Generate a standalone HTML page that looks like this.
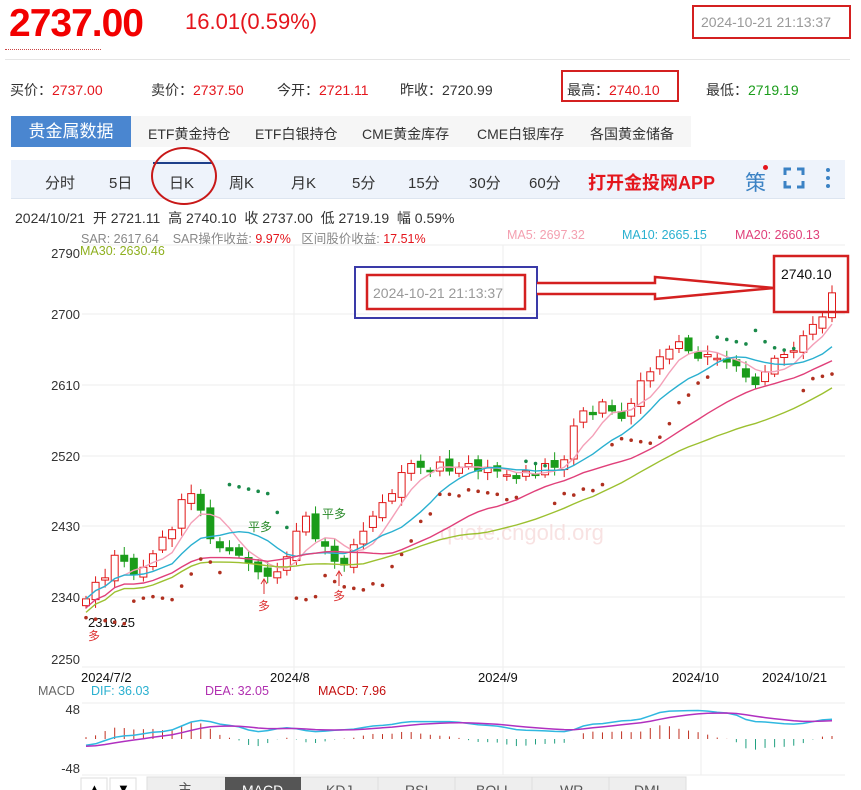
<!DOCTYPE html>
<html><head><meta charset="utf-8">
<style>
body{margin:0;width:861px;height:790px;overflow:hidden;background:#fff;font-family:"Liberation Sans","Noto Sans CJK SC",sans-serif;position:relative}
.a{position:absolute;white-space:nowrap}
.r{color:#e4151c}.g{color:#1a9c1a}
</style></head><body>
<div class="a" style="left:9px;top:2px;font-size:39px;font-weight:bold;color:#f20000;letter-spacing:-1px">2737.00</div>
<div class="a" style="left:185px;top:9px;font-size:22px;color:#e4151c">16.01(0.59%)</div>
<div class="a" style="left:692px;top:5px;width:155px;height:30px;border:2px solid #d42020"></div>
<div class="a" style="left:701px;top:14px;font-size:14px;color:#999">2024-10-21 21:13:37</div>
<div class="a" style="left:5px;top:49px;width:96px;border-top:1px dotted #c44"></div>
<div class="a" style="left:5px;top:59px;width:845px;border-top:1px solid #e5e5e5"></div>
<div class="a" style="left:10px;top:80px;font-size:14px;color:#333">买价：<span class="r">2737.00</span></div>
<div class="a" style="left:151px;top:80px;font-size:14px;color:#333">卖价：<span class="r">2737.50</span></div>
<div class="a" style="left:277px;top:80px;font-size:14px;color:#333">今开：<span class="r">2721.11</span></div>
<div class="a" style="left:400px;top:80px;font-size:14px;color:#333">昨收：2720.99</div>
<div class="a" style="left:561px;top:70px;width:114px;height:28px;border:2px solid #d42020"></div>
<div class="a" style="left:567px;top:80px;font-size:14px;color:#333">最高：<span class="r">2740.10</span></div>
<div class="a" style="left:706px;top:80px;font-size:14px;color:#333">最低：<span class="g">2719.19</span></div>
<div class="a" style="left:11px;top:116px;width:680px;height:31px;background:#f6f6f6"></div>
<div class="a" style="left:11px;top:116px;width:120px;height:31px;background:#4a86d0;color:#fff;font-size:17px;line-height:31px;text-align:center">贵金属数据</div>
<div class="a" style="left:148px;top:124px;font-size:14px;color:#333">ETF黄金持仓</div>
<div class="a" style="left:255px;top:124px;font-size:14px;color:#333">ETF白银持仓</div>
<div class="a" style="left:362px;top:124px;font-size:14px;color:#333">CME黄金库存</div>
<div class="a" style="left:477px;top:124px;font-size:14px;color:#333">CME白银库存</div>
<div class="a" style="left:590px;top:124px;font-size:14px;color:#333">各国黄金储备</div>
<div class="a" style="left:11px;top:160px;width:834px;height:38px;background:#eef3fb;border-bottom:1px solid #dde5f0"></div>
<div class="a" style="left:153px;top:162px;width:59px;border-top:2px solid #1d3f8a"></div>
<div class="a" style="top:172px;left:0;font-size:15px;color:#333;width:600px">
<span class="a" style="left:45px">分时</span><span class="a" style="left:109px">5日</span><span class="a" style="left:169px">日K</span><span class="a" style="left:229px">周K</span><span class="a" style="left:291px">月K</span><span class="a" style="left:352px">5分</span><span class="a" style="left:408px">15分</span><span class="a" style="left:469px">30分</span><span class="a" style="left:529px">60分</span></div>
<div class="a" style="left:588px;top:169px;font-size:18px;font-weight:bold;color:#e4151c">打开金投网APP</div>
<div class="a" style="left:745px;top:167px;font-size:21px;color:#3b82c4">策</div>
<div class="a" style="left:763px;top:165px;width:5px;height:5px;border-radius:50%;background:#e4151c"></div>
<svg class="a" style="left:783px;top:167px" width="22" height="22"><path d="M2 8V2H8M14 2H20V8M20 14V20H14M8 20H2V14" fill="none" stroke="#3b82c4" stroke-width="3"/></svg>
<svg class="a" style="left:824px;top:166px" width="8" height="24"><circle cx="4" cy="4" r="2" fill="#3b82c4"/><circle cx="4" cy="12" r="2" fill="#3b82c4"/><circle cx="4" cy="20" r="2" fill="#3b82c4"/></svg>
<div class="a" style="left:15px;top:208px;font-size:14px;color:#333">2024/10/21 &nbsp;开 2721.11 &nbsp;高 2740.10 &nbsp;收 2737.00 &nbsp;低 2719.19 &nbsp;幅 0.59%</div>
<div class="a" style="left:81px;top:228px;font-size:12.5px;color:#888">SAR: 2617.64 &nbsp;&nbsp;&nbsp;SAR操作收益: <span class="r">9.97%</span> &nbsp;&nbsp;区间股价收益: <span class="r">17.51%</span></div>
<div class="a" style="left:507px;top:228px;font-size:12.5px;color:#f4a0b0">MA5: 2697.32</div>
<div class="a" style="left:622px;top:228px;font-size:12.5px;color:#2ab0d0">MA10: 2665.15</div>
<div class="a" style="left:735px;top:228px;font-size:12.5px;color:#e0407a">MA20: 2660.13</div>
<div class="a" style="left:80px;top:244px;font-size:12.5px;color:#8fb020">MA30: 2630.46</div>
<svg class="a" style="left:0;top:0" width="861" height="790">
<g stroke="#eee" stroke-width="1">
<line x1="82" y1="245" x2="845" y2="245"/><line x1="82" y1="314" x2="845" y2="314"/><line x1="82" y1="385" x2="845" y2="385"/><line x1="82" y1="456" x2="845" y2="456"/><line x1="82" y1="526" x2="845" y2="526"/><line x1="82" y1="597" x2="845" y2="597"/><line x1="82" y1="667" x2="845" y2="667"/>
<line x1="294" y1="245" x2="294" y2="775"/><line x1="503" y1="245" x2="503" y2="775"/><line x1="701" y1="245" x2="701" y2="775"/>
<line x1="82" y1="703" x2="845" y2="703"/><line x1="82" y1="775" x2="845" y2="775"/>
</g>
<g font-size="13" fill="#333" text-anchor="end"><text x="80" y="258">2790</text><text x="80" y="319">2700</text><text x="80" y="390">2610</text><text x="80" y="461">2520</text><text x="80" y="531">2430</text><text x="80" y="602">2340</text><text x="80" y="664">2250</text></g>
<g font-size="13" fill="#111"><text x="81" y="682">2024/7/2</text><text x="270" y="682">2024/8</text><text x="478" y="682">2024/9</text><text x="672" y="682">2024/10</text><text x="762" y="682">2024/10/21</text></g>
<text x="88" y="627" font-size="13" fill="#111">2319.25</text>
<text x="88" y="640" font-size="12" fill="#d33">多</text>
<text x="258" y="610" font-size="12" fill="#d33">多</text><text x="333" y="600" font-size="12" fill="#d33">多</text>
<g stroke="#d33" fill="none"><path d="M264 580V594M261 584L264 579L267 584M339 572V586M336 576L339 571L342 576"/></g>
<text x="248" y="531" font-size="12" fill="#2a8a2a">平多</text><text x="322" y="518" font-size="12" fill="#2a8a2a">平多</text>
<text x="440" y="540" font-size="22" fill="#f4d0d0" opacity=".6">quote.cngold.org</text>
<g font-size="12.5"><text x="38" y="695" fill="#666">MACD</text><text x="91" y="695" fill="#2ab0d0">DIF: 36.03</text><text x="205" y="695" fill="#b030b0">DEA: 32.05</text><text x="318" y="695" fill="#c41010">MACD: 7.96</text></g>
<g font-size="13" fill="#333" text-anchor="end"><text x="80" y="714">48</text><text x="80" y="773">-48</text></g>
<g id="cd"></g>
<rect x="355" y="267" width="182" height="51" fill="none" stroke="#3a3aa8" stroke-width="2"/>
<rect x="367" y="275" width="158" height="34" fill="none" stroke="#d42020" stroke-width="2.5"/>
<text x="373" y="298" font-size="14" fill="#999">2024-10-21 21:13:37</text>
<path d="M537 283 L655 283 L655 277 L774 288 L655 299 L655 294 L537 294" fill="#fff" stroke="#d42020" stroke-width="2.5"/>
<rect x="774" y="256" width="74" height="56" fill="none" stroke="#d42020" stroke-width="2.5"/>
<text x="781" y="279" font-size="14" fill="#111">2740.10</text>
<g font-size="13"><rect x="81" y="778" width="26" height="14" fill="#fff" stroke="#ddd"/><rect x="110" y="778" width="26" height="14" fill="#fff" stroke="#ddd"/>
<text x="88" y="793">▲</text><text x="117" y="793">▼</text>
<rect x="147" y="777" width="539" height="15" fill="#eee" stroke="#ddd"/><rect x="225" y="777" width="76" height="15" fill="#555"/>
<g stroke="#ddd"><line x1="378" y1="777" x2="378" y2="790"/><line x1="455" y1="777" x2="455" y2="790"/><line x1="532" y1="777" x2="532" y2="790"/><line x1="609" y1="777" x2="609" y2="790"/></g>
<g fill="#555" font-size="14"><text x="178" y="794">主</text><text x="326" y="795">KDJ</text><text x="405" y="795">RSI</text><text x="476" y="795">BOLL</text><text x="560" y="795">WR</text><text x="634" y="795">DMI</text></g>
<text x="242" y="795" fill="#fff" font-size="14">MACD</text></g>
</svg>
<div class="a" style="left:151px;top:147px;width:62px;height:54px;border:2px solid #c81818;border-radius:50%"></div>
<script>
var C=[2330,2352,2358,2388,2380,2362,2372,2390,2412,2422,2462,2470,2448,2410,2398,2394,2388,2378,2366,2360,2366,2386,2420,2440,2410,2400,2380,2375,2402,2420,2440,2458,2470,2498,2510,2505,2500,2512,2500,2505,2510,2500,2505,2500,2495,2490,2500,2495,2510,2505,2515,2560,2580,2575,2592,2580,2570,2590,2620,2632,2652,2662,2672,2660,2650,2655,2650,2645,2640,2625,2615,2632,2650,2655,2660,2680,2695,2705,2737];
var n=C.length,x0=86,dx=(832-86)/(n-1);
function Y(p){return 253+(2790-p)*0.7519}
var h='',O=[2321],i,j,x;for(i=1;i<n;i++)O.push(C[i-1]+((i*37)%11-5));
for(i=0;i<n;i++){var o=O[i],c=C[i];x=x0+i*dx;var up=c>=o,hi=Math.max(o,c)+4+(i*13)%9,lo=Math.min(o,c)-4-(i*7)%8;
var col=up?'#e01818':'#1a9c1a',t=Y(Math.max(o,c)),b=Y(Math.min(o,c));if(b-t<1.5)b=t+1.5;
h+='<line x1="'+x+'" y1="'+Y(hi)+'" x2="'+x+'" y2="'+Y(lo)+'" stroke="'+col+'"/>';
h+='<rect x="'+(x-3.5)+'" y="'+t+'" width="7" height="'+(b-t)+'" fill="'+(up?'#fff':col)+'" stroke="'+col+'"/>';}
function ma(k,col){var p='';for(var i=0;i<n;i++){var s=0,m=Math.min(k,i+1);for(var j=0;j<m;j++)s+=C[i-j];p+=(i?'L':'M')+(x0+i*dx).toFixed(1)+' '+Y(s/m-(k>10?k*0.6:0)).toFixed(1);}h+='<path d="'+p+'" fill="none" stroke="'+col+'" stroke-width="1.4"/>';}
ma(5,'#f4a0b8');ma(10,'#2ab0d0');ma(20,'#e0407a');ma(30,'#9cc030');
for(i=0;i<n;i++){x=x0+i*dx;var below=!((i>=15&&i<=21)||(i>=46&&i<=48)||(i>=66&&i<=74));
var v=below?Math.min.apply(null,C.slice(Math.max(0,i-4),i+1))-25-(i%5)*2:Math.max.apply(null,C.slice(Math.max(0,i-8),i+1))+15-(i%7)*3;
h+='<circle cx="'+x+'" cy="'+Y(v)+'" r="1.8" fill="'+(below?'#b03020':'#1a8a4a')+'"/>';}
var K=[[0,-10],[4,5],[8,12],[12,30],[15,22],[18,12],[21,18],[24,12],[27,15],[31,22],[34,28],[38,28],[42,22],[46,14],[50,12],[53,24],[57,30],[61,45],[64,46],[67,42],[70,28],[74,24],[78,32]];
function kv(i){for(var k=0;k<K.length-1;k++){if(i<=K[k+1][0]){var a=K[k],b=K[k+1],t=(i-a[0])/(b[0]-a[0]);t=(1-Math.cos(t*Math.PI))/2;return a[1]+(b[1]-a[1])*t;}}return K[K.length-1][1];}
var z=739,d1='',d2='',dea=-12;
for(i=0;i<n;i++){x=x0+i*dx;var dif=kv(i);dea=dea+(dif-dea)*0.22;
d1+=(i?'L':'M')+x.toFixed(1)+' '+(z-dif*0.62).toFixed(1);d2+=(i?'L':'M')+x.toFixed(1)+' '+(z-dea*0.62).toFixed(1);
var m=(dif-dea)*2;h+='<line x1="'+x+'" y1="'+z+'" x2="'+x+'" y2="'+(z-m*0.62)+'" stroke="'+(m>0?'#c03020':'#20a080')+'"/>';}
h+='<path d="'+d1+'" fill="none" stroke="#30b8e0" stroke-width="1.5"/><path d="'+d2+'" fill="none" stroke="#b030c0" stroke-width="1.5"/>';
document.getElementById('cd').innerHTML=h;
</script>
</body></html>
